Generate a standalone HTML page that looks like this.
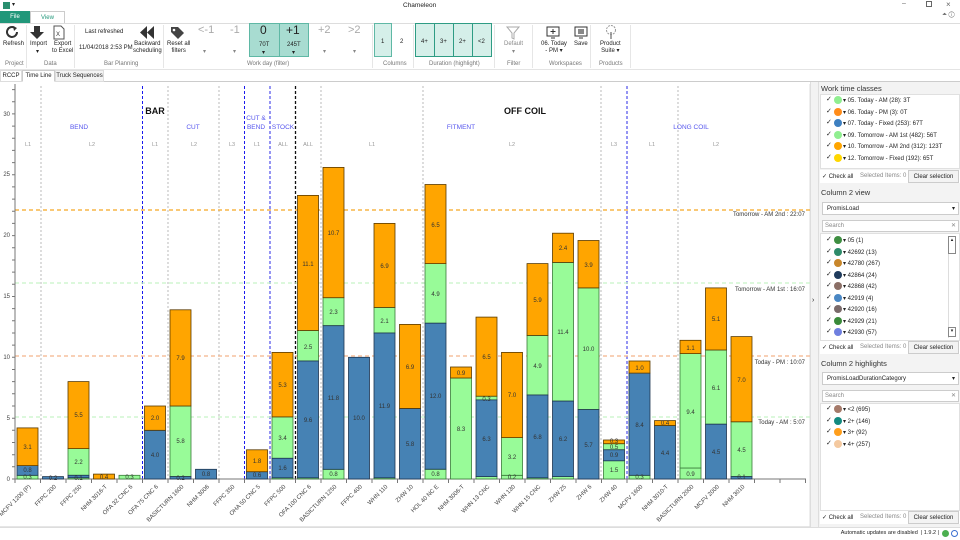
<!DOCTYPE html>
<html><head><meta charset="utf-8"><style>
*{margin:0;padding:0;box-sizing:border-box}
body{width:960px;height:540px;overflow:hidden;background:#fff;font-family:"Liberation Sans",sans-serif;position:relative;color:#222}
.a{position:absolute;white-space:nowrap}
.s{font-size:6px}
.g{color:#888}
.lbl{font-size:6px;color:#777}
.tb{border:1px solid #5fb8a5;background:#a8dcd1}
.lt{border:1px solid #5fb8a5;background:#d5efe9}
.dot{display:inline-block;width:8px;height:8px;border-radius:50%;vertical-align:middle;margin:0 1px 0 2px}
.chk{display:inline-block;width:6px;height:6px;font-size:7px;line-height:6px;vertical-align:middle}
.item{position:absolute;left:826px;font-size:6px;white-space:nowrap;height:10px;line-height:10px}
</style></head><body>
<div class="a" style="left:3px;top:2px;width:7px;height:7px;background:#2a8f6f"></div>
<div class="a s" style="left:12px;top:1px">▾</div>
<div class="a" style="left:403px;top:2px;font-size:6.5px">Chameleon</div>
<div class="a" style="left:902px;top:0px;font-size:7px;color:#666">–</div>
<div class="a" style="left:926px;top:1px;width:6px;height:6px;border:1px solid #666"></div>
<div class="a" style="left:946px;top:0px;font-size:8px;color:#666">×</div>
<div class="a" style="left:942px;top:12px;font-size:6px;color:#666">⏶ ⓘ</div>
<div class="a" style="left:0;top:11px;width:30px;height:12px;background:#21977a;color:#fff;font-size:6px;text-align:center;line-height:12px">File</div>
<div class="a" style="left:30px;top:11px;width:35px;height:13px;background:#fff;border:1px solid #ccc;border-bottom:none;color:#21977a;font-size:6px;text-align:center;line-height:12px">View</div>
<div class="a" style="left:0;top:23px;width:960px;height:47px;border-top:1px solid #ddd;border-bottom:1px solid #e4e4e4"></div>
<div class="a" style="left:26px;top:25px;width:1px;height:43px;background:#e6e6e6"></div>
<div class="a" style="left:74px;top:25px;width:1px;height:43px;background:#e6e6e6"></div>
<div class="a" style="left:163px;top:25px;width:1px;height:43px;background:#e6e6e6"></div>
<div class="a" style="left:372px;top:25px;width:1px;height:43px;background:#e6e6e6"></div>
<div class="a" style="left:413px;top:25px;width:1px;height:43px;background:#e6e6e6"></div>
<div class="a" style="left:494px;top:25px;width:1px;height:43px;background:#e6e6e6"></div>
<div class="a" style="left:532px;top:25px;width:1px;height:43px;background:#e6e6e6"></div>
<div class="a" style="left:590px;top:25px;width:1px;height:43px;background:#e6e6e6"></div>
<div class="a" style="left:630px;top:25px;width:1px;height:43px;background:#e6e6e6"></div>
<svg class="a" style="left:6px;top:26px" width="14" height="14"><path d="M11 6a5 5 0 1 1-2-4" fill="none" stroke="#333" stroke-width="2"/><path d="M7 0l4 2-3 3z" fill="#333"/></svg>
<div class="a s" style="left:3px;top:41px">Refresh</div>
<div class="a lbl" style="left:5px;top:61px">Project</div>
<svg class="a" style="left:30px;top:26px" width="14" height="14"><path d="M4 0h6v6h4l-7 7-7-7h4z" fill="#333"/></svg>
<div class="a s" style="left:30px;top:41px">Import</div><div class="a s" style="left:36px;top:48px">▾</div>
<svg class="a" style="left:53px;top:25px" width="12" height="15"><path d="M1 1h7l3 3v10H1z" fill="#fff" stroke="#555"/><text x="3" y="11" font-size="6" font-family="Liberation Sans" fill="#333">X</text></svg>
<div class="a s" style="left:52px;top:41px;text-align:center;line-height:7px">Export<br>to Excel</div>
<div class="a lbl" style="left:44px;top:61px">Data</div>
<div class="a s" style="left:85px;top:29px">Last refreshed</div>
<div class="a s" style="left:79px;top:45px">11/04/2018 2:53 PM</div>
<svg class="a" style="left:140px;top:26px" width="14" height="13"><path d="M7 0v13L0 6.5zM14 0v13L7 6.5z" fill="#333"/></svg>
<div class="a s" style="left:133px;top:41px;text-align:center;line-height:7px">Backward<br>scheduling</div>
<div class="a lbl" style="left:104px;top:61px">Bar Planning</div>
<svg class="a" style="left:170px;top:26px" width="15" height="13"><path d="M1 1h7l6 6-6 6-7-7z" fill="#444"/><circle cx="4" cy="4" r="1.3" fill="#fff"/></svg>
<div class="a s" style="left:167px;top:41px;text-align:center;line-height:7px">Reset all<br>filters</div>
<div class="a" style="left:198px;top:24px;font-size:11px;color:#aaa">&lt;-1</div>
<div class="a s g" style="left:203px;top:48px">▾</div>
<div class="a" style="left:230px;top:24px;font-size:11px;color:#aaa">-1</div>
<div class="a s g" style="left:233px;top:48px">▾</div>
<div class="a tb" style="left:249px;top:23px;width:31px;height:34px"></div>
<div class="a tb" style="left:279px;top:23px;width:30px;height:34px"></div>
<div class="a" style="left:260px;top:23px;font-size:12px">0</div>
<div class="a s" style="left:259px;top:42px">70T</div><div class="a s" style="left:262px;top:49px">▾</div>
<div class="a" style="left:286px;top:23px;font-size:12px">+1</div>
<div class="a s" style="left:287px;top:42px">245T</div><div class="a s" style="left:292px;top:49px">▾</div>
<div class="a" style="left:318px;top:24px;font-size:11px;color:#aaa">+2</div>
<div class="a s g" style="left:323px;top:48px">▾</div>
<div class="a" style="left:348px;top:24px;font-size:11px;color:#aaa">&gt;2</div>
<div class="a s g" style="left:353px;top:48px">▾</div>
<div class="a lbl" style="left:247px;top:61px">Work day (filter)</div>
<div class="a lt" style="left:374px;top:23px;width:18px;height:34px"></div>
<div class="a s" style="left:381px;top:39px">1</div>
<div class="a s" style="left:400px;top:39px">2</div>
<div class="a lbl" style="left:383px;top:61px">Columns</div>
<div class="a lt" style="left:415px;top:23px;width:20px;height:34px;border-color:#2e9c84"></div>
<div class="a lt" style="left:434px;top:23px;width:20px;height:34px;border-color:#2e9c84"></div>
<div class="a lt" style="left:453px;top:23px;width:20px;height:34px;border-color:#2e9c84"></div>
<div class="a lt" style="left:472px;top:23px;width:20px;height:34px;border-color:#2e9c84"></div>
<div class="a s" style="left:421px;top:39px">4+</div>
<div class="a s" style="left:440px;top:39px">3+</div>
<div class="a s" style="left:459px;top:39px">2+</div>
<div class="a s" style="left:478px;top:39px">&lt;2</div>
<div class="a lbl" style="left:429px;top:61px">Duration (highlight)</div>
<svg class="a" style="left:506px;top:26px" width="14" height="14"><path d="M1 1h12l-5 6v6l-2-1V7z" fill="none" stroke="#aaa"/></svg>
<div class="a s g" style="left:504px;top:41px">Default</div><div class="a s g" style="left:512px;top:48px">▾</div>
<div class="a lbl" style="left:507px;top:61px">Filter</div>
<svg class="a" style="left:546px;top:26px" width="14" height="14"><rect x="1" y="1" width="12" height="9" fill="#fff" stroke="#333"/><path d="M7 3v5M4.5 5.5h5M5 12h4" stroke="#333"/></svg>
<div class="a s" style="left:541px;top:41px;text-align:center;line-height:7px">06. Today<br>- PM ▾</div>
<svg class="a" style="left:574px;top:26px" width="14" height="14"><rect x="1" y="1" width="12" height="9" fill="#fff" stroke="#333"/><rect x="4" y="3" width="6" height="5" fill="#888"/><path d="M5 12h4" stroke="#333"/></svg>
<div class="a s" style="left:574px;top:41px">Save</div>
<div class="a lbl" style="left:549px;top:61px">Workspaces</div>
<svg class="a" style="left:604px;top:25px" width="14" height="15"><circle cx="7" cy="5" r="4.5" fill="none" stroke="#999" stroke-dasharray="2 1"/><path d="M7 7v7" stroke="#888" stroke-width="1.5"/></svg>
<div class="a s" style="left:600px;top:41px;text-align:center;line-height:7px">Product<br>Suite ▾</div>
<div class="a lbl" style="left:599px;top:61px">Products</div>
<div class="a" style="left:0;top:70px;width:960px;height:12px;background:#fff;border-bottom:1px solid #ccc"></div>
<div class="a s" style="left:0;top:70px;width:22px;height:12px;border:1px solid #ddd;text-align:center;line-height:11px">RCCP</div>
<div class="a s" style="left:22px;top:70px;width:33px;height:12px;border:1px solid #ccc;border-bottom:1px solid #fff;text-align:center;line-height:11px">Time Line</div>
<div class="a s" style="left:55px;top:70px;width:49px;height:12px;border:1px solid #ddd;background:#f3f3f3;text-align:center;line-height:11px">Truck Sequences</div>
<svg class="a" style="left:0;top:82px" width="812" height="448" viewBox="0 82 812 448" font-family="Liberation Sans">
<rect x="0" y="82" width="812" height="448" fill="#fff"/>
<line x1="0" y1="527" x2="812" y2="527" stroke="#ccc"/>
<line x1="810" y1="84" x2="810" y2="527" stroke="#ddd"/>
<g stroke-dasharray="2 2" stroke-width="0.8">
<line x1="41" y1="86" x2="41" y2="479" stroke="#aaa"/>
<line x1="168" y1="86" x2="168" y2="479" stroke="#aaa"/>
<line x1="219" y1="86" x2="219" y2="479" stroke="#aaa"/>
<line x1="321" y1="86" x2="321" y2="479" stroke="#aaa"/>
<line x1="423" y1="86" x2="423" y2="479" stroke="#aaa"/>
<line x1="601" y1="86" x2="601" y2="479" stroke="#aaa"/>
<line x1="678" y1="86" x2="678" y2="479" stroke="#aaa"/>
</g>
<g stroke-dasharray="3 2">
<line x1="142.5" y1="86" x2="142.5" y2="479" stroke="#1a1aee" stroke-width="1"/>
<line x1="244.5" y1="86" x2="244.5" y2="479" stroke="#1a1aee" stroke-width="1"/>
<line x1="270" y1="86" x2="270" y2="479" stroke="#7b7bf0" stroke-width="1.6"/>
<line x1="295.5" y1="86" x2="295.5" y2="479" stroke="#111" stroke-width="1.3"/>
<line x1="627" y1="86" x2="627" y2="479" stroke="#7b7bf0" stroke-width="1.6"/>
</g>
<g stroke-dasharray="4 3" stroke-width="1.2">
<line x1="15" y1="210" x2="810" y2="210" stroke="#f5a623"/>
<line x1="15" y1="283" x2="810" y2="283" stroke="#c6f3c6"/>
<line x1="15" y1="356" x2="810" y2="356" stroke="#f3b48a"/>
<line x1="15" y1="417" x2="810" y2="417" stroke="#c6f3c6"/>
</g>
<g font-size="6" fill="#333" text-anchor="end">
<text x="805" y="216">Tomorrow - AM 2nd : 22:07</text>
<text x="805" y="291">Tomorrow - AM 1st : 16:07</text>
<text x="805" y="364">Today - PM : 10:07</text>
<text x="805" y="424">Today - AM : 5:07</text>
</g>
<g font-weight="bold" font-size="9" fill="#111" text-anchor="middle">
<text x="155" y="114">BAR</text><text x="525" y="114">OFF COIL</text>
</g>
<g font-size="6.5" fill="#5555ee" text-anchor="middle">
<text x="79" y="129">BEND</text><text x="193" y="129">CUT</text>
<text x="256" y="120">CUT &amp;</text><text x="256" y="129">BEND</text>
<text x="283" y="129">STOCK</text><text x="461" y="129">FITMENT</text><text x="691" y="129">LONG COIL</text>
</g>
<g font-size="5.5" fill="#999" text-anchor="middle">
<text x="28" y="146">L1</text><text x="92" y="146">L2</text><text x="155" y="146">L1</text><text x="194" y="146">L2</text><text x="232" y="146">L3</text><text x="257" y="146">L1</text><text x="283" y="146">ALL</text><text x="308" y="146">ALL</text><text x="372" y="146">L1</text><text x="512" y="146">L2</text><text x="614" y="146">L3</text><text x="652" y="146">L1</text><text x="716" y="146">L2</text>
</g>
<line x1="15" y1="84" x2="15" y2="479" stroke="#777"/>
<line x1="15" y1="479" x2="806" y2="479" stroke="#777"/>
<g stroke="#777">
<path d="M12 479h3M12 466.8h3M12 454.7h3M12 442.5h3M12 430.3h3M12 418.2h3M12 406h3M12 393.8h3M12 381.6h3M12 369.5h3M12 357.3h3M12 345.1h3M12 333h3M12 320.8h3M12 308.6h3M12 296.5h3M12 284.3h3M12 272.1h3M12 260h3M12 247.8h3M12 235.6h3M12 223.4h3M12 211.3h3M12 199.1h3M12 186.9h3M12 174.8h3M12 162.6h3M12 150.4h3M12 138.3h3M12 126.1h3M12 113.9h3M12 101.7h3M12 89.6h3"/>
<path d="M15 479v4M40.5 479v4M66 479v4M91.5 479v4M117 479v4M142.5 479v4M168 479v4M193.5 479v4M219 479v4M244.5 479v4M270 479v4M295.5 479v4M321 479v4M346.5 479v4M372 479v4M397.5 479v4M423 479v4M448.5 479v4M474 479v4M499.5 479v4M525 479v4M550.5 479v4M576 479v4M601.5 479v4M627 479v4M652.5 479v4M678 479v4M703.5 479v4M729 479v4M754.5 479v4M780 479v4M805.5 479v4"/>
</g>
<g font-size="6" fill="#444" text-anchor="end">
<text x="10" y="481">0</text><text x="10" y="420">5</text><text x="10" y="359">10</text><text x="10" y="298">15</text><text x="10" y="237">20</text><text x="10" y="176">25</text><text x="10" y="116">30</text>
</g>
<g stroke-width="0.8">
<g fill="#98fb98" stroke="#3a7a3a">
<rect x="17" y="475.3" width="21" height="3.7"/>
<rect x="68" y="477.8" width="21" height="1.2"/><rect x="68" y="448.6" width="21" height="26.7"/>
<rect x="119" y="475.3" width="21" height="3.7"/>
<rect x="170" y="406" width="21" height="70.6"/>
<rect x="272" y="477.8" width="21" height="1.2"/><rect x="272" y="416.9" width="21" height="41.4"/>
<rect x="297.5" y="477.8" width="21" height="1.2"/><rect x="297.5" y="330.5" width="21" height="30.5"/>
<rect x="323" y="469.3" width="21" height="9.7"/><rect x="323" y="297.7" width="21" height="28"/>
<rect x="374" y="477.8" width="21" height="1.2"/><rect x="374" y="307.4" width="21" height="25.6"/>
<rect x="425" y="469.3" width="21" height="9.7"/><rect x="425" y="263.6" width="21" height="59.6"/>
<rect x="450.5" y="378" width="21" height="101"/>
<rect x="476" y="476.6" width="21" height="2.4"/><rect x="476" y="396.2" width="21" height="3.7"/>
<rect x="501.5" y="475.3" width="21" height="3.7"/><rect x="501.5" y="437.6" width="21" height="37.7"/>
<rect x="527" y="477.8" width="21" height="1.2"/><rect x="527" y="335.4" width="21" height="59.6"/>
<rect x="552.5" y="476.6" width="21" height="2.4"/><rect x="552.5" y="262.4" width="21" height="138.7"/>
<rect x="578" y="287.9" width="21" height="121.7"/>
<rect x="603.5" y="460.7" width="21" height="18.3"/><rect x="603.5" y="443.7" width="21" height="6.1"/>
<rect x="629" y="475.3" width="21" height="3.7"/>
<rect x="680" y="468" width="21" height="11"/><rect x="680" y="353.6" width="21" height="114.4"/>
<rect x="705.5" y="350" width="21" height="74.2"/>
<rect x="731" y="421.8" width="21" height="54.8"/>
</g>
<g fill="#4682b4" stroke="#1d3550">
<rect x="17" y="465.6" width="21" height="9.7"/>
<rect x="42.5" y="476.6" width="21" height="2.4"/>
<rect x="68" y="475.3" width="21" height="2.4"/>
<rect x="144.5" y="430.3" width="21" height="48.7"/>
<rect x="170" y="476.6" width="21" height="2.4"/>
<rect x="195.5" y="469.3" width="21" height="9.7"/>
<rect x="246.5" y="471.7" width="21" height="7.3"/>
<rect x="272" y="458.3" width="21" height="19.5"/>
<rect x="297.5" y="361" width="21" height="116.8"/>
<rect x="323" y="325.7" width="21" height="143.6"/>
<rect x="348.5" y="357.3" width="21" height="121.7"/>
<rect x="374" y="333" width="21" height="144.8"/>
<rect x="399.5" y="408.4" width="21" height="70.6"/>
<rect x="425" y="323.2" width="21" height="146"/>
<rect x="476" y="399.9" width="21" height="76.7"/>
<rect x="527" y="395" width="21" height="82.8"/>
<rect x="552.5" y="401.1" width="21" height="75.5"/>
<rect x="578" y="409.6" width="21" height="69.4"/>
<rect x="603.5" y="449.8" width="21" height="11"/>
<rect x="629" y="373.1" width="21" height="102.2"/>
<rect x="654.5" y="425.5" width="21" height="53.5"/>
<rect x="705.5" y="424.2" width="21" height="54.8"/>
<rect x="731" y="476.6" width="21" height="2.4"/>
</g>
<g fill="#ffa500" stroke="#5a3a00">
<rect x="17" y="427.9" width="21" height="37.7"/>
<rect x="68" y="381.6" width="21" height="67"/>
<rect x="93.5" y="474.1" width="21" height="4.9"/>
<rect x="144.5" y="406" width="21" height="24.3"/>
<rect x="170" y="309.8" width="21" height="96.2"/>
<rect x="246.5" y="449.8" width="21" height="21.9"/>
<rect x="272" y="352.4" width="21" height="64.5"/>
<rect x="297.5" y="195.4" width="21" height="135.1"/>
<rect x="323" y="167.4" width="21" height="130.3"/>
<rect x="374" y="223.4" width="21" height="84"/>
<rect x="399.5" y="324.4" width="21" height="84"/>
<rect x="425" y="184.5" width="21" height="79.1"/>
<rect x="450.5" y="367" width="21" height="11"/>
<rect x="476" y="317.1" width="21" height="79.1"/>
<rect x="501.5" y="352.4" width="21" height="85.2"/>
<rect x="527" y="263.6" width="21" height="71.8"/>
<rect x="552.5" y="233.2" width="21" height="29.2"/>
<rect x="578" y="240.5" width="21" height="47.4"/>
<rect x="603.5" y="440" width="21" height="3.7"/>
<rect x="629" y="361" width="21" height="12.1"/>
<rect x="654.5" y="420.6" width="21" height="4.9"/>
<rect x="680" y="340.3" width="21" height="13.3"/>
<rect x="705.5" y="287.9" width="21" height="62.1"/>
<rect x="731" y="336.6" width="21" height="85.2"/>
</g>
</g>
<g font-size="6" fill="#333" text-anchor="middle">
<text x="27.5" y="479">0.3</text><text x="27.5" y="472">0.8</text><text x="27.5" y="449">3.1</text>
<text x="53" y="480">0.2</text>
<text x="78.5" y="480">0.1</text><text x="78.5" y="464">2.2</text><text x="78.5" y="417">5.5</text>
<text x="104" y="479">0.4</text><text x="129.5" y="479">0.3</text>
<text x="155" y="457">4.0</text><text x="155" y="420">2.0</text>
<text x="180.5" y="443">5.8</text><text x="180.5" y="360">7.9</text><text x="180.5" y="480">0.2</text>
<text x="206" y="476">0.8</text>
<text x="257" y="477">0.6</text><text x="257" y="463">1.8</text>
<text x="282.5" y="470">1.6</text><text x="282.5" y="440">3.4</text><text x="282.5" y="387">5.3</text>
<text x="308" y="422">9.6</text><text x="308" y="349">2.5</text><text x="308" y="266">11.1</text>
<text x="333.5" y="476">0.8</text><text x="333.5" y="400">11.8</text><text x="333.5" y="314">2.3</text><text x="333.5" y="235">10.7</text>
<text x="359" y="420">10.0</text>
<text x="384.5" y="408">11.9</text><text x="384.5" y="323">2.1</text><text x="384.5" y="268">6.9</text>
<text x="410" y="446">5.8</text><text x="410" y="369">6.9</text>
<text x="435.5" y="476">0.8</text><text x="435.5" y="398">12.0</text><text x="435.5" y="296">4.9</text><text x="435.5" y="227">6.5</text>
<text x="461" y="431">8.3</text><text x="461" y="375">0.9</text>
<text x="486.5" y="441">6.3</text><text x="486.5" y="401">0.3</text><text x="486.5" y="359">6.5</text>
<text x="512" y="459">3.2</text><text x="512" y="397">7.0</text><text x="512" y="479">0.2</text>
<text x="537.5" y="439">6.8</text><text x="537.5" y="368">4.9</text><text x="537.5" y="302">5.9</text>
<text x="563" y="441">6.2</text><text x="563" y="334">11.4</text><text x="563" y="250">2.4</text>
<text x="588.5" y="447">5.7</text><text x="588.5" y="351">10.0</text><text x="588.5" y="267">3.9</text>
<text x="614" y="472">1.5</text><text x="614" y="457">0.9</text><text x="614" y="449">0.5</text><text x="614" y="443">0.3</text>
<text x="639.5" y="427">8.4</text><text x="639.5" y="370">1.0</text><text x="639.5" y="479">0.3</text>
<text x="665" y="455">4.4</text><text x="665" y="425">0.4</text>
<text x="690.5" y="476">0.9</text><text x="690.5" y="414">9.4</text><text x="690.5" y="350">1.1</text>
<text x="716" y="454">4.5</text><text x="716" y="390">6.1</text><text x="716" y="321">5.1</text>
<text x="741.5" y="452">4.5</text><text x="741.5" y="382">7.0</text><text x="741.5" y="479">0.1</text>
</g>
<g font-size="6" fill="#444" text-anchor="end">
<text transform="translate(31,487) rotate(-45)">MCFV 1200 (P)</text>
<text transform="translate(56.5,487) rotate(-45)">FFPC 200</text>
<text transform="translate(82,487) rotate(-45)">FFPC 250</text>
<text transform="translate(107.5,487) rotate(-45)">NHM 3016-T</text>
<text transform="translate(133,487) rotate(-45)">OFA 32 CNC 6</text>
<text transform="translate(158.5,487) rotate(-45)">OFA 75 CNC 6</text>
<text transform="translate(184,487) rotate(-45)">BASICTURN 1600</text>
<text transform="translate(209.5,487) rotate(-45)">NHM 3006</text>
<text transform="translate(235,487) rotate(-45)">FFPC 350</text>
<text transform="translate(260.5,487) rotate(-45)">OHA 50 CNC 5</text>
<text transform="translate(286,487) rotate(-45)">FFPC 500</text>
<text transform="translate(311.5,487) rotate(-45)">OFA 100 CNC 6</text>
<text transform="translate(337,487) rotate(-45)">BASICTURN 1250</text>
<text transform="translate(362.5,487) rotate(-45)">FFPC 400</text>
<text transform="translate(388,487) rotate(-45)">WHN 110</text>
<text transform="translate(413.5,487) rotate(-45)">ZHW 10</text>
<text transform="translate(439,487) rotate(-45)">HOL 40 NC E</text>
<text transform="translate(464.5,487) rotate(-45)">NHM 3006-T</text>
<text transform="translate(490,487) rotate(-45)">WHN 13 CNC</text>
<text transform="translate(515.5,487) rotate(-45)">WHN 130</text>
<text transform="translate(541,487) rotate(-45)">WHN 15 CNC</text>
<text transform="translate(566.5,487) rotate(-45)">ZHW 25</text>
<text transform="translate(592,487) rotate(-45)">ZHW 6</text>
<text transform="translate(617.5,487) rotate(-45)">ZHW 40</text>
<text transform="translate(643,487) rotate(-45)">MCFV 1600</text>
<text transform="translate(668.5,487) rotate(-45)">NHM 3010-T</text>
<text transform="translate(694,487) rotate(-45)">BASICTURN 2000</text>
<text transform="translate(719.5,487) rotate(-45)">MCFV 2000</text>
<text transform="translate(745,487) rotate(-45)">NHM 3010</text>
</g>
</svg>
<div class="a" style="left:810px;top:82px;width:8px;height:446px;background:#f2f2f2;border-left:1px solid #ddd"></div>
<div class="a" style="left:812px;top:297px;font-size:7px">›</div>
<div class="a" style="left:818px;top:82px;width:142px;height:446px;background:#f3f3f3;border-left:1px solid #ddd"></div>
<div class="a" style="left:821px;top:84px;font-size:7.5px;color:#333">Work time classes</div>
<div class="a" style="left:820px;top:94px;width:140px;height:75px;background:#fff;border:1px solid #e0e0e0"></div>
<div class="item" style="top:96px"><span class="chk">✓</span><span class="dot" style="background:#90ee90"></span>▾ 05. Today - AM (28): 3T</div>
<div class="item" style="top:108px"><span class="chk">✓</span><span class="dot" style="background:#ff8c1a"></span>▾ 06. Today - PM (3): 0T</div>
<div class="item" style="top:119px"><span class="chk">✓</span><span class="dot" style="background:#3d7fc0"></span>▾ 07. Today - Fixed (253): 67T</div>
<div class="item" style="top:131px"><span class="chk">✓</span><span class="dot" style="background:#90ee90"></span>▾ 09. Tomorrow - AM 1st (482): 56T</div>
<div class="item" style="top:142px"><span class="chk">✓</span><span class="dot" style="background:#ffa500"></span>▾ 10. Tomorrow - AM 2nd (312): 123T</div>
<div class="item" style="top:154px"><span class="chk">✓</span><span class="dot" style="background:#ffd700"></span>▾ 12. Tomorrow - Fixed (192): 65T</div>
<div class="a" style="left:820px;top:170px;width:140px;height:13px;background:#fff"></div>
<div class="a s" style="left:822px;top:173px">✓ Check all</div>
<div class="a s g" style="left:860px;top:173px">Selected Items: 0</div>
<div class="a s" style="left:908px;top:170px;width:51px;height:13px;border:1px solid #ccc;background:#f3f3f3;text-align:center;line-height:12px">Clear selection</div>
<div class="a" style="left:821px;top:188px;font-size:7.5px;color:#333">Column 2 view</div>
<div class="a s" style="left:822px;top:202px;width:137px;height:13px;border:1px solid #ccc;background:#fff;padding-left:4px;line-height:12px">PromisLoad<span style="position:absolute;right:3px">▾</span></div>
<div class="a s g" style="left:822px;top:220px;width:137px;height:12px;border:1px solid #ccc;background:#fff;padding-left:2px;line-height:11px">Search<span style="position:absolute;right:2px">✕</span></div>
<div class="a" style="left:820px;top:233px;width:140px;height:108px;background:#fff;border:1px solid #e0e0e0"></div>
<div class="a" style="left:948px;top:236px;width:8px;height:102px;border-left:1px solid #ddd"></div>
<div class="a" style="left:948px;top:236px;width:8px;height:18px;border:1px solid #888;font-size:5px;text-align:center">▴</div>
<div class="a" style="left:948px;top:327px;width:8px;height:10px;border:1px solid #888;font-size:5px;text-align:center">▾</div>
<div class="item" style="top:236px"><span class="chk">✓</span><span class="dot" style="background:#3e8e41"></span>▾ 05 (1)</div>
<div class="item" style="top:248px"><span class="chk">✓</span><span class="dot" style="background:#2e8b6a"></span>▾ 42692 (13)</div>
<div class="item" style="top:259px"><span class="chk">✓</span><span class="dot" style="background:#c8862a"></span>▾ 42780 (267)</div>
<div class="item" style="top:271px"><span class="chk">✓</span><span class="dot" style="background:#1f3b5c"></span>▾ 42864 (24)</div>
<div class="item" style="top:282px"><span class="chk">✓</span><span class="dot" style="background:#8b6f66"></span>▾ 42868 (42)</div>
<div class="item" style="top:294px"><span class="chk">✓</span><span class="dot" style="background:#4a87c4"></span>▾ 42919 (4)</div>
<div class="item" style="top:305px"><span class="chk">✓</span><span class="dot" style="background:#7a6a6a"></span>▾ 42920 (16)</div>
<div class="item" style="top:317px"><span class="chk">✓</span><span class="dot" style="background:#3a8a3a"></span>▾ 42929 (21)</div>
<div class="item" style="top:328px"><span class="chk">✓</span><span class="dot" style="background:#6f7fdf"></span>▾ 42930 (57)</div>
<div class="a" style="left:820px;top:341px;width:140px;height:13px;background:#fff"></div>
<div class="a s" style="left:822px;top:344px">✓ Check all</div>
<div class="a s g" style="left:860px;top:344px">Selected Items: 0</div>
<div class="a s" style="left:908px;top:341px;width:51px;height:13px;border:1px solid #ccc;background:#f3f3f3;text-align:center;line-height:12px">Clear selection</div>
<div class="a" style="left:821px;top:359px;font-size:7.5px;color:#333">Column 2 highlights</div>
<div class="a s" style="left:822px;top:372px;width:137px;height:13px;border:1px solid #ccc;background:#fff;padding-left:4px;line-height:12px">PromisLoadDurationCategory<span style="position:absolute;right:3px">▾</span></div>
<div class="a s g" style="left:822px;top:390px;width:137px;height:12px;border:1px solid #ccc;background:#fff;padding-left:2px;line-height:11px">Search<span style="position:absolute;right:2px">✕</span></div>
<div class="a" style="left:820px;top:403px;width:140px;height:108px;background:#fff;border:1px solid #e0e0e0"></div>
<div class="item" style="top:405px"><span class="chk">✓</span><span class="dot" style="background:#a57a6a"></span>▾ &lt;2 (695)</div>
<div class="item" style="top:417px"><span class="chk">✓</span><span class="dot" style="background:#138a80"></span>▾ 2+ (146)</div>
<div class="item" style="top:428px"><span class="chk">✓</span><span class="dot" style="background:#ff9e1b"></span>▾ 3+ (92)</div>
<div class="item" style="top:440px"><span class="chk">✓</span><span class="dot" style="background:#f4c9a0"></span>▾ 4+ (257)</div>
<div class="a" style="left:820px;top:511px;width:140px;height:13px;background:#fff"></div>
<div class="a s" style="left:822px;top:514px">✓ Check all</div>
<div class="a s g" style="left:860px;top:514px">Selected Items: 0</div>
<div class="a s" style="left:908px;top:511px;width:51px;height:13px;border:1px solid #ccc;background:#f3f3f3;text-align:center;line-height:12px">Clear selection</div>
<div class="a" style="left:0;top:527px;width:960px;height:13px;background:#fff;border-top:1px solid #ddd"></div>
<div class="a" style="right:21px;top:530px;font-size:5.5px">Automatic updates are disabled &nbsp;| 1.9.2 |</div>
<div class="a" style="left:942px;top:530px;width:7px;height:7px;border-radius:50%;background:#4caf50"></div>
<div class="a" style="left:951px;top:530px;width:7px;height:7px;border-radius:50%;border:1px solid #3a6fd0"></div>
</body></html>
